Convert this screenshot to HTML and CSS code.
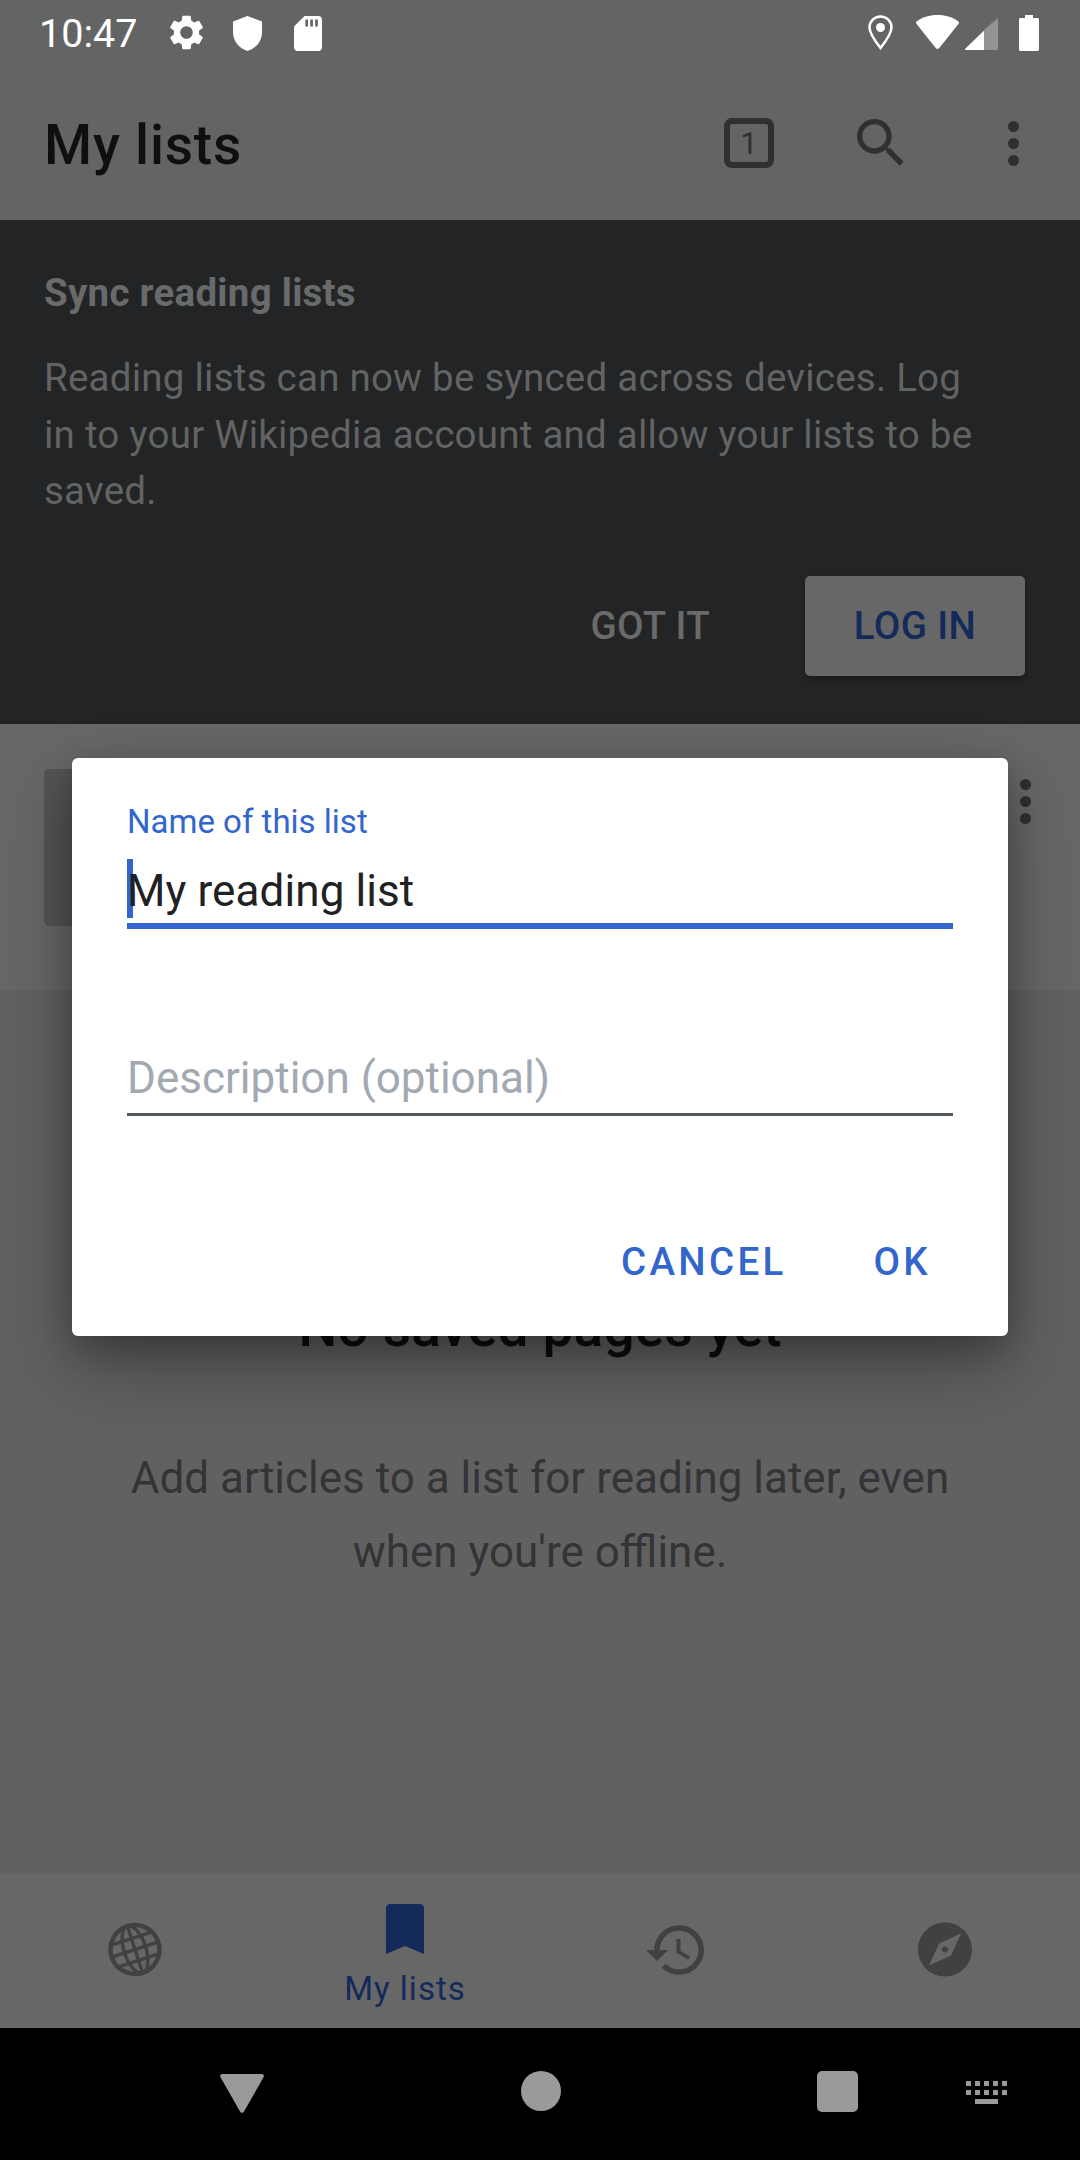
FILE: index.html
```html
<!DOCTYPE html>
<html lang="en">
<head>
<meta charset="utf-8">
<title>My lists</title>
<link rel="stylesheet" href="styles.css">
</head>
<body>
<div class="app">
  <header class="top">
    <div class="status">
      <span class="time">10:47</span>
      <svg class="st gear" viewBox="2.6 2 18.8 20"><path d="M19.14 12.94c.04-.3.06-.61.06-.94 0-.32-.02-.64-.07-.94l2.03-1.58a.49.49 0 0 0 .12-.61l-1.92-3.32a.49.49 0 0 0-.59-.22l-2.39.96c-.5-.38-1.03-.7-1.62-.94l-.36-2.54a.48.48 0 0 0-.48-.41h-3.84c-.24 0-.43.17-.47.41l-.36 2.54c-.59.24-1.13.57-1.62.94l-2.39-.96c-.22-.08-.47 0-.59.22L2.74 8.87c-.12.21-.08.47.12.61l2.03 1.58c-.05.3-.09.63-.09.94s.02.64.07.94l-2.03 1.58a.49.49 0 0 0-.12.61l1.92 3.32c.12.22.37.29.59.22l2.39-.96c.5.38 1.03.7 1.62.94l.36 2.54c.05.24.24.41.48.41h3.84c.24 0 .44-.17.47-.41l.36-2.54c.59-.24 1.13-.56 1.62-.94l2.39.96c.22.08.47 0 .59-.22l1.92-3.32c.12-.22.07-.47-.12-.61l-2.01-1.58zM12 15.6A3.6 3.6 0 1 1 12 8.4a3.6 3.6 0 0 1 0 7.2z"/></svg>
      <svg class="st shield" viewBox="0 0 29 35"><path d="M14.5 0 29 5.5V16c0 9-6 16.500-14.500 19C6 32.500 0 25 0 16V5.500z"/></svg>
      <svg class="st sd" viewBox="4 2 16 20"><path d="M18 2h-8L4.020 8 4 20c0 1.100.9 2 2 2h12c1.100 0 2-.9 2-2V4c0-1.100-.9-2-2-2zm-6 6h-1.500V4H12v4zm2.800 0h-1.500V4h1.500v4zm2.800 0h-1.500V4h1.500v4z"/></svg>
      <span class="grow"></span>
      <svg class="st pin" viewBox="0 0 25 35"><path fill="none" stroke="#fff" stroke-width="2.500" d="M12.500 1.500C6.400 1.500 1.500 6.400 1.500 12.500c0 5.500 5.500 13.500 11 20.500 5.500-7 11-15 11-20.500 0-6.100-4.900-11-11-11z"/><circle cx="12.500" cy="12.500" r="4.500"/></svg>
      <svg class="st wifi" viewBox="0 0 43 34"><path d="M21.500 0C13 0 6 2.300.6 6.500a1.600 1.600 0 0 0-.2 2.200L19.700 33a2.300 2.300 0 0 0 3.600 0L42.600 8.700a1.600 1.600 0 0 0-.2-2.200C37 2.300 30 0 21.500 0z"/></svg>
      <svg class="st signal" viewBox="0 0 33 33"><path d="M33 0 0 32v1h19V14z" fill="#fff"/><path d="M33 1.500V31.500a1.500 1.500 0 0 1-1.500 1.500H19V14z" fill="#949494"/></svg>
      <svg class="st battery" viewBox="0 0 20 36"><path d="M6 0h8v3h4.500c.8 0 1.500.7 1.500 1.500V34.500c0 .8-.7 1.500-1.500 1.500h-17C.7 36 0 35.300 0 34.500V4.500C0 3.700.7 3 1.500 3H6z"/></svg>
    </div>
    <div class="toolbar">
      <h1 class="title">My lists</h1>
      <span class="tabs"><span class="tabs-num">1</span></span>
      <svg class="search" viewBox="3 3 18 18"><path d="M15.500 14h-.79l-.28-.27A6.470 6.470 0 0 0 16 9.500 6.500 6.500 0 1 0 9.500 16c1.610 0 3.090-.59 4.230-1.570l.27.28v.79l5 4.990L20.490 19l-4.990-5zm-6 0C7.010 14 5 11.990 5 9.500S7.010 5 9.500 5 14 7.010 14 9.500 11.990 14 9.500 14z"/></svg>
      <span class="dots dots-top"><i></i><i></i><i></i></span>
    </div>
  </header>

  <section class="banner">
    <h2 class="banner-title">Sync reading lists</h2>
    <p class="banner-text">Reading lists can now be synced across devices. Log in to your Wikipedia account and allow your lists to be saved.</p>
    <div class="banner-actions">
      <span class="got">GOT IT</span>
      <span class="login">LOG IN</span>
    </div>
  </section>

  <section class="row">
    <div class="thumb"></div>
    <span class="dots dots-row"><i></i><i></i><i></i></span>
  </section>

  <main class="empty">
    <h2 class="empty-title">No saved pages yet</h2>
    <p class="empty-text">Add articles to a list for reading later, even when you're offline.</p>
  </main>

  <nav class="tabsbar">
    <div class="tab">
      <svg class="ic-globe" viewBox="0 0 54 54"><g fill="none" stroke="#414141" stroke-width="3.400" transform="rotate(-18 27 27)"><circle cx="27" cy="27" r="24.500" stroke-width="4.500"/><ellipse cx="27" cy="27" rx="11" ry="24.500"/><path d="M27 2.500v49M2.500 27h49M6 15.500h42M6 38.500h42"/></g></svg>
    </div>
    <div class="tab">
      <svg class="ic-mark" viewBox="0 0 38 50"><path d="M4 0h30c2.200 0 4 1.800 4 4v46l-19-8-19 8V4c0-2.200 1.800-4 4-4z"/></svg>
      <span class="tab-label">My lists</span>
    </div>
    <div class="tab">
      <svg class="ic-hist" viewBox="1 3 21 18"><path d="M13 3c-4.970 0-9 4.030-9 9H1l3.890 3.890.07.14L9 12H6c0-3.870 3.130-7 7-7s7 3.130 7 7-3.130 7-7 7c-1.930 0-3.680-.79-4.940-2.060l-1.420 1.420C8.270 19.990 10.510 21 13 21c4.970 0 9-4.030 9-9s-4.030-9-9-9zm-1 5v5l4.280 2.540.72-1.210-3.500-2.080V8H12z"/></svg>
    </div>
    <div class="tab">
      <svg class="ic-comp" viewBox="2 2 20 20"><path d="M12 10.900c-.61 0-1.100.49-1.100 1.100s.49 1.100 1.100 1.100c.61 0 1.100-.49 1.100-1.100s-.49-1.100-1.100-1.100zM12 2C6.480 2 2 6.480 2 12s4.480 10 10 10 10-4.480 10-10S17.520 2 12 2zm2.190 12.190L6 18l3.810-8.190L18 6l-3.810 8.190z"/></svg>
    </div>
  </nav>

  <footer class="sysnav">
    <svg class="sys-back" viewBox="0 0 44 39"><path d="M2.500 0h39c2 0 3 1.500 2 3.300L24 37.500c-1 1.800-3 1.800-4 0L.5 3.300C-.5 1.500.5 0 2.500 0z"/></svg>
    <span class="sys-home"></span>
    <span class="sys-recent"></span>
    <svg class="sys-kbd" viewBox="0 0 41 23"><path d="M0 0h5v5H0zM9 0h5v5H9zM18 0h5v5h-5zM27 0h5v5h-5zM36 0h5v5h-5zM0 9h5v5H0zM9 9h5v5H9zM18 9h5v5h-5zM27 9h5v5h-5zM36 9h5v5h-5zM9 18h23v5H9z"/></svg>
  </footer>

  <div class="dialog">
    <label class="field-label">Name of this list</label>
    <div class="field-value"><span class="caret"></span><span class="field-text">My reading list</span></div>
    <div class="field-desc">Description (optional)</div>
    <div class="dialog-actions">
      <span class="action">CANCEL</span>
      <span class="action">OK</span>
    </div>
  </div>
</div>
</body>
</html>
```

FILE: styles.css
```css
* { box-sizing: border-box; }
html, body { margin: 0; padding: 0; }
body { font-family: Roboto, "Liberation Sans", sans-serif; background: #000; }

.app {
  position: relative;
  width: 1080px;
  height: 2160px;
  display: flex;
  flex-direction: column;
  overflow: hidden;
}

.top { height: 220px; background: #636564; }
.status {
  height: 66px;
  padding: 15px 41px 0 39px;
  display: flex;
  align-items: flex-start;
}
.time { font-size: 39.5px; line-height: 40px; color: #fff; width: 131px; margin-top: -1px; }
.st { display: block; fill: #fff; }
.gear { width: 33px; height: 35px; }
.shield { width: 29px; height: 35px; margin-left: 30px; margin-top: 1px; }
.sd { width: 28px; height: 35px; margin-left: 32px; margin-top: 1px; }
.grow { flex: 1; }
.pin { width: 25px; height: 35px; }
.wifi { width: 43px; height: 34px; margin-left: 23px; }
.signal { width: 33px; height: 33px; margin-left: 6px; margin-top: 2px; }
.battery { width: 20px; height: 36px; margin-left: 21px; }

.toolbar {
  height: 154px;
  padding: 0 61px 0 44px;
  display: flex;
  align-items: center;
}
.title { margin: 0; flex: 1; font-size: 55px; font-weight: 500; letter-spacing: .8px; color: #0f0f0f; line-height: 60px; margin-top: 4px; }
.tabs {
  width: 50px; height: 50px;
  border: 6px solid #2f3032;
  border-radius: 8px;
  display: flex; align-items: center; justify-content: center;
  font-size: 31px; color: #2f3032;
}
.tabs-num { line-height: 1; }
.search { width: 48px; height: 48px; fill: #2f3032; margin-left: 83px; }
.dots { display: flex; flex-direction: column; gap: 6px; }
.dots i { display: block; width: 11px; height: 11px; border-radius: 50%; background: #2f3032; }
.dots-top { margin-left: 103px; }

.banner { height: 504px; background: #232426; padding: 0 85px 0 44px; display: flex; flex-direction: column; }
.banner-title { margin: 51px 0 0; font-size: 38.500px; line-height: 44px; letter-spacing: .25px; font-weight: 700; color: #696a6a; }
.banner-text { margin: 35px 0 0; font-size: 38.500px; line-height: 56.500px; letter-spacing: .24px; color: #626363; }
.banner-actions { display: flex; align-items: center; justify-content: flex-end; margin: 56px -30px 0 0; }
.got { font-size: 38.500px; font-weight: 500; letter-spacing: .3px; color: #6a6a6a; margin-right: 95px; }
.login {
  width: 220px; height: 100px;
  background: #676767;
  border-radius: 5px;
  display: flex; align-items: center; justify-content: center;
  font-size: 38.500px; font-weight: 500; letter-spacing: .4px; color: #142a5a;
  box-shadow: 0 3px 6px rgba(0,0,0,.3);
}

.row {
  height: 266px;
  background: #676767;
  padding: 45px 49px 0 44px;
  display: flex;
  justify-content: space-between;
  align-items: flex-start;
}
.thumb { width: 157px; height: 157px; background: #545456; border-radius: 5px; }
.dots-row { margin-top: 10px; }

.empty { flex: 1; background: #616162; padding-top: 307px; text-align: center; }
.empty-title { margin: 0; font-size: 55px; line-height: 60px; font-weight: 500; letter-spacing: .2px; color: #0d0d0d; }
.empty-text { margin: 84px 116px 0; font-size: 44px; line-height: 74px; color: #333436; }

.tabsbar { height: 154px; background: #676767; display: grid; grid-template-columns: repeat(4, 270px); }
.tab { display: flex; flex-direction: column; align-items: center; justify-content: center; }
.ic-globe { width: 54px; height: 55px; margin-top: -3px; }
.ic-mark { width: 38px; height: 50px; fill: #142a5a; margin-top: 10px; }
.tab-label { font-size: 33px; line-height: 38px; letter-spacing: 1px; color: #142a5a; margin-top: 16px; }
.ic-hist { width: 58px; height: 50px; fill: #414141; margin-top: -3px; }
.ic-comp { width: 54px; height: 55px; fill: #414141; margin-top: -3px; }

.sysnav {
  height: 132px; background: #000;
  padding-left: 220px;
  display: flex; align-items: center;
}
.sys-back { width: 44px; height: 39px; fill: #9a9a9a; margin-top: -2px; }
.sys-home { width: 40px; height: 40px; border-radius: 50%; background: #9a9a9a; margin-left: 257px; margin-top: -6px; }
.sys-recent { width: 41px; height: 41px; border-radius: 5px; background: #9a9a9a; margin-left: 256px; margin-top: -6px; }
.sys-kbd { width: 41px; height: 23px; fill: #9a9a9a; margin-left: 108px; margin-top: -4px; }

.dialog {
  position: absolute;
  left: 72px; top: 758px;
  width: 936px; height: 578px;
  background: #fff;
  border-radius: 6px;
  padding: 0 55px;
  box-shadow: 0 30px 70px rgba(0,0,0,.32), 0 10px 30px rgba(0,0,0,.2);
  display: flex;
  flex-direction: column;
}
.field-label { margin: 44px 0 0; font-size: 33px; line-height: 40px; color: #3366cc; }
.field-value {
  position: relative;
  margin-top: 17px;
  height: 70px;
  font-size: 44px;
  line-height: 64px;
  color: #202122;
  border-bottom: 6px solid #3366cc;
}
.field-text { position: relative; letter-spacing: .1px; }
.caret { position: absolute; left: 0; top: 0; width: 6px; height: 59px; background: #3366cc; }
.field-desc {
  margin-top: 114px;
  height: 73px; font-size: 44px; line-height: 70px;
  color: #a2a9b1;
  border-bottom: 3px solid #54595d;
}
.dialog-actions { display: flex; justify-content: flex-end; gap: 87px; margin-top: 124px; padding-right: 22px; }
.action { font-size: 38.500px; font-weight: 500; line-height: 44px; letter-spacing: 3.3px; color: #3366cc; }
```
